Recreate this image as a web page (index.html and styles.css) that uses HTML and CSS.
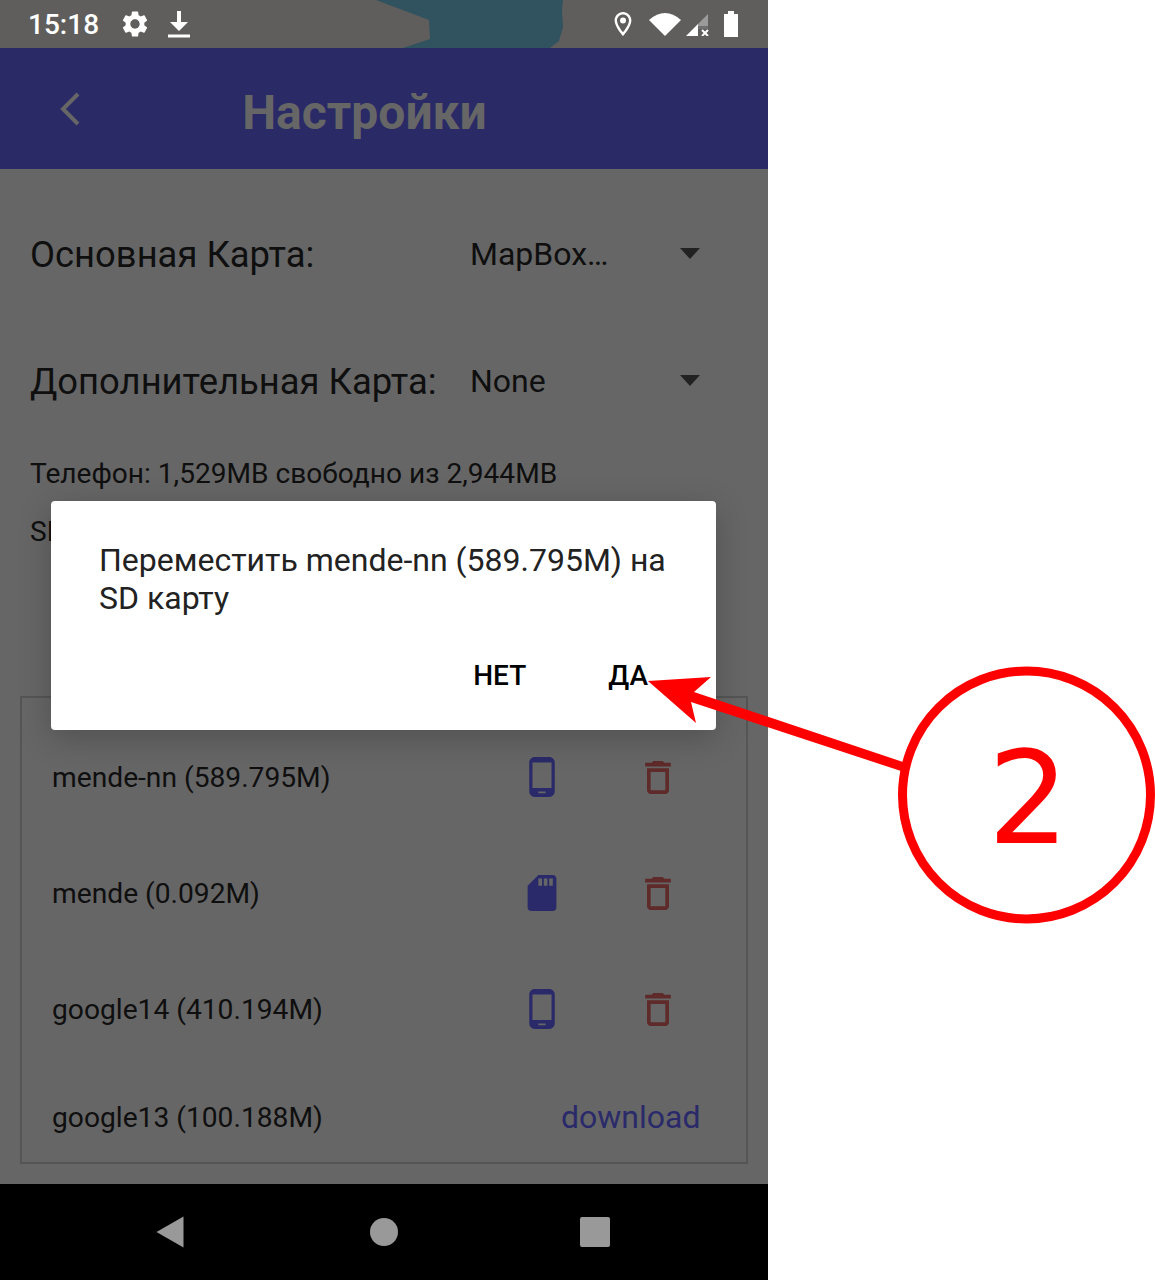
FILE: index.html
```html
<!DOCTYPE html>
<html>
  <head>
    <meta charset="utf-8" />
    <title>Настройки</title>
    <link rel="stylesheet" href="styles.css">
  </head>
  <body>
    <svg class="defs">
      <symbol id="phone" viewBox="5 1 14 22"><path d="M16 1H8C6.34 1 5 2.34 5 4v16c0 1.66 1.34 3 3 3h8c1.66 0 3-1.34 3-3V4c0-1.66-1.34-3-3-3zm-2 20h-4v-1h4v1zm3.25-3H6.75V4h10.5v14z"/></symbol>
      <symbol id="sd" viewBox="4 2 16 20"><path d="M18 2h-8L4.02 8 4 20c0 1.1.9 2 2 2h12c1.1 0 2-.9 2-2V4c0-1.1-.9-2-2-2zm-6 6h-2V4h2v4zm3 0h-2V4h2v4zm3 0h-2V4h2v4z"/></symbol>
      <symbol id="trash" viewBox="5 3 14 18"><path d="M6 19c0 1.1.9 2 2 2h8c1.1 0 2-.9 2-2V7H6v12zM8 9h8v10H8V9zm7.5-5l-1-1h-5l-1 1H5v2h14V4h-3.5z"/></symbol>
    </svg>

    <div class="screen">
      <div class="statusbar">
        <svg class="wallpaper" width="768" height="48"><polygon points="376,0 429,20 430,39 403,48 550,48 559,41 563,27 562,10 563,0"/></svg>
        <div class="status-left">
          <span class="clock">15:18</span>
          <svg class="st-gear" viewBox="2.5 2 19 20"><path d="M19.14 12.94c.04-.3.06-.61.06-.94 0-.32-.02-.64-.07-.94l2.03-1.58c.18-.14.23-.41.12-.61l-1.92-3.32c-.12-.22-.37-.29-.59-.22l-2.39.96c-.5-.38-1.03-.7-1.62-.94l-.36-2.54c-.04-.24-.24-.41-.48-.41h-3.84c-.24 0-.43.17-.47.41l-.36 2.54c-.59.24-1.13.57-1.62.94l-2.39-.96c-.22-.08-.47 0-.59.22L2.74 8.87c-.12.21-.08.47.12.61l2.03 1.58c-.05.3-.09.63-.09.94s.02.64.07.94l-2.03 1.58c-.18.14-.23.41-.12.61l1.92 3.32c.12.22.37.29.59.22l2.39-.96c.5.38 1.03.7 1.62.94l.36 2.54c.05.24.24.41.48.41h3.84c.24 0 .44-.17.47-.41l.36-2.54c.59-.24 1.13-.56 1.62-.94l2.39.96c.22.08.47 0 .59-.22l1.92-3.32c.12-.22.07-.47-.12-.61l-2.01-1.58zM12 15.6c-1.98 0-3.6-1.62-3.6-3.6s1.62-3.6 3.6-3.6 3.6 1.62 3.6 3.6-1.62 3.6-3.6 3.6z"/></svg>
          <svg class="st-down" viewBox="0 0 22 27"><path d="M9 0h4v11h7L11 20 2 11h7zM0 23.500h22v3H0z"/></svg>
        </div>
        <div class="status-right">
          <svg class="st-pin" viewBox="5 2 14 20"><path fill-rule="evenodd" d="M12 2C8.130 2 5 5.130 5 9c0 5.250 7 13 7 13s7-7.750 7-13c0-3.870-3.130-7-7-7zM7 9c0-2.760 2.240-5 5-5s5 2.240 5 5c0 2.880-2.880 7.190-5 9.880C9.920 16.210 7 11.850 7 9z"/><circle cx="12" cy="9" r="2.500"/></svg>
          <svg class="st-wifi" viewBox="0 0 32 23"><path d="M0 7Q16-7 32 7L16 23z"/></svg>
          <svg class="st-signal" viewBox="0 0 23 22"><polygon class="sig-off" points="22,0 12,10 12,12 22,12"/><polygon class="sig-mid" points="12,12 22,12 22,15 12,15"/><polygon points="0,22 12,10 12,22"/><path class="sig-x" d="M16 16l6 6m0-6l-6 6"/></svg>
          <svg class="st-batt" viewBox="0 0 14 26"><path d="M4 0h6v3h4v23H0V3h4z"/></svg>
        </div>
      </div>

      <div class="toolbar">
        <svg class="back" viewBox="0 0 20 34"><path d="M18 2L3 17l15 15"/></svg>
        <h1 class="title">Настройки</h1>
      </div>

      <div class="content">
        <div class="map-row">
          <span class="map-label">Основная Карта:</span>
          <span class="map-value">MapBox…</span>
          <span class="caret"></span>
        </div>
        <div class="map-row">
          <span class="map-label">Дополнительная Карта:</span>
          <span class="map-value">None</span>
          <span class="caret"></span>
        </div>
        <p class="storage">Телефон: 1,529MB свободно из 2,944MB</p>
        <p class="storage">SD</p>

        <div class="maps-box">
          <div class="map-item">
            <span class="map-name">mende-nn (589.795M)</span>
            <svg class="ic-store"><use href="#phone"/></svg>
            <svg class="ic-del"><use href="#trash"/></svg>
          </div>
          <div class="map-item">
            <span class="map-name">mende (0.092M)</span>
            <svg class="ic-store ic-sd"><use href="#sd"/></svg>
            <svg class="ic-del"><use href="#trash"/></svg>
          </div>
          <div class="map-item">
            <span class="map-name">google14 (410.194M)</span>
            <svg class="ic-store"><use href="#phone"/></svg>
            <svg class="ic-del"><use href="#trash"/></svg>
          </div>
          <div class="map-item last">
            <span class="map-name">google13 (100.188M)</span>
            <span class="download">download</span>
          </div>
        </div>
      </div>

      <div class="navbar">
        <svg class="nav-back" viewBox="0 0 28 32"><path d="M27.500 .500v31L.500 16z"/></svg>
        <span class="nav-home"></span>
        <span class="nav-recent"></span>
      </div>

      <div class="dialog">
        <p class="dialog-text">Переместить mende-nn (589.795M) на SD карту</p>
        <div class="dialog-btns">
          <span class="dialog-btn no">НЕТ</span>
          <span class="dialog-btn">ДА</span>
        </div>
      </div>
    </div>

    <!-- annotation drawn on top of the screenshot -->
    <svg class="note" width="1155" height="1280">
      <polygon points="648,681 711,677 694,692 903,762 901,771 691,702 696,723"/>
      <circle cx="1026.500" cy="795" r="124"/>
      <text x="1028.500" y="843" text-anchor="middle">2</text>
    </svg>
  </body>
</html>
```

FILE: styles.css
```css
html, body {
  margin: 0;
  padding: 0;
  background-color: #fff;
}
body {
  position: relative;
  width: 1155px;
  height: 1280px;
  overflow: hidden;
  font-family: Roboto, "Noto Sans", sans-serif;
}
.defs {
  display: none;
}
.screen {
  position: relative;
  display: flex;
  flex-direction: column;
  width: 768px;
  height: 1280px;
  background-color: #666;
}

/* status bar */
.statusbar {
  position: relative;
  display: flex;
  justify-content: space-between;
  align-items: center;
  height: 48px;
  background-color: #5f5e5c;
  color: #fff;
  flex: none;
}
.wallpaper {
  position: absolute;
  left: 0;
  top: 0;
}
.wallpaper polygon {
  fill: #31535f;
}
.status-left, .status-right {
  position: relative;
  display: flex;
  align-items: center;
}
.status-left {
  padding-left: 28px;
}
.status-right {
  padding-right: 30px;
}
.statusbar svg {
  fill: #fff;
  display: block;
}
.statusbar .wallpaper {
  position: absolute;
}
.clock {
  font-size: 28px;
  font-weight: 500;
  width: 94px;
}
.st-gear { width: 26px; height: 26px; margin-right: 20px; }
.st-down { width: 22px; height: 27px; }
.st-pin { width: 18px; height: 24px; margin-right: 17px; }
.st-wifi { width: 32px; height: 23px; margin-right: 5px; }
.st-signal { width: 23px; height: 22px; margin-right: 15px; margin-top: 2px; }
.st-batt { width: 14px; height: 26px; }
.statusbar .sig-off { fill: #9a9a9a; }
.statusbar .sig-mid { fill: #6f6f70; }
.sig-x {
  stroke: #fff;
  stroke-width: 2;
  fill: none;
}

/* toolbar */
.toolbar {
  position: relative;
  display: flex;
  align-items: center;
  justify-content: center;
  height: 121px;
  padding-right: 39px;
  box-sizing: border-box;
  background-color: #2a2a66;
  flex: none;
}
.back {
  position: absolute;
  left: 60px;
  top: 44px;
  width: 20px;
  height: 34px;
  fill: none;
  stroke: #666;
  stroke-width: 4;
}
.title {
  margin: 8px 0 0;
  font-size: 48px;
  font-weight: 700;
  color: #666;
}

/* settings */
.content {
  flex: 1;
  padding-top: 22px;
}
.map-row {
  display: flex;
  align-items: center;
  height: 127px;
  padding-left: 30px;
}
.map-label {
  width: 440px;
  font-size: 36.400px;
  color: #0f0f0f;
  flex: none;
}
.map-value {
  width: 210px;
  font-size: 32px;
  line-height: 36px;
  margin-top: -1px;
  color: #0f0f0f;
  flex: none;
}
.caret {
  width: 0;
  height: 0;
  border-left: 10px solid transparent;
  border-right: 10px solid transparent;
  border-top: 11px solid #222;
  margin-top: -2px;
}
.storage {
  margin: 0;
  height: 58px;
  line-height: 58px;
  padding-left: 30px;
  font-size: 28.100px;
  color: #0f0f0f;
}
.maps-box {
  box-sizing: border-box;
  width: 728px;
  height: 468px;
  margin: 135px 0 0 20px;
  padding-top: 21px;
  border: 2px solid #555;
}
.map-item {
  position: relative;
  display: flex;
  align-items: center;
  height: 116px;
  padding-left: 30px;
}
.map-item.last {
  height: 92px;
  margin-top: 4px;
}
.map-name {
  width: 477px;
  font-size: 28.200px;
  color: #0f0f0f;
  flex: none;
}
.ic-store {
  width: 26px;
  height: 40px;
  fill: #2a2a6a;
  flex: none;
}
.ic-sd {
  width: 30px;
  height: 36px;
  margin-left: -2px;
  margin-right: -2px;
}
.ic-del {
  width: 26px;
  height: 33px;
  margin-left: 90px;
  fill: #5f2a2a;
  flex: none;
}
.download {
  margin-left: 32px;
  font-size: 32px;
  color: #2a2a6a;
}

/* nav bar */
.navbar {
  position: relative;
  height: 96px;
  background-color: #000;
  flex: none;
}
.navbar > * {
  position: absolute;
}
.nav-back {
  left: 156px;
  top: 32px;
  width: 28px;
  height: 32px;
  fill: #999;
}
.nav-home {
  left: 370px;
  top: 34px;
  width: 28px;
  height: 28px;
  border-radius: 50%;
  background-color: #999;
}
.nav-recent {
  left: 580px;
  top: 33px;
  width: 30px;
  height: 30px;
  border-radius: 2px;
  background-color: #999;
}

/* dialog */
.dialog {
  position: absolute;
  left: 51px;
  top: 501px;
  box-sizing: border-box;
  width: 665px;
  height: 229px;
  padding: 40px 48px 0 48px;
  border-radius: 4px;
  background-color: #fff;
  box-shadow: 0 8px 32px rgba(0, 0, 0, 0.22);
}
.dialog-text {
  margin: 0;
  font-size: 32px;
  line-height: 38px;
  color: #222;
}
.dialog-btns {
  display: flex;
  justify-content: flex-end;
  margin-top: 40px;
  margin-right: 20px;
}
.dialog-btn {
  font-size: 28px;
  font-weight: 500;
  line-height: 38px;
  color: #000;
}
.dialog-btn.no {
  margin-right: 82px;
}

/* annotation */
.note {
  position: absolute;
  left: 0;
  top: 0;
}
.note polygon {
  fill: #f00;
}
.note circle {
  fill: none;
  stroke: #f00;
  stroke-width: 9;
}
.note text {
  font-family: "DejaVu Sans", sans-serif;
  font-size: 128px;
  fill: #f00;
}
```
